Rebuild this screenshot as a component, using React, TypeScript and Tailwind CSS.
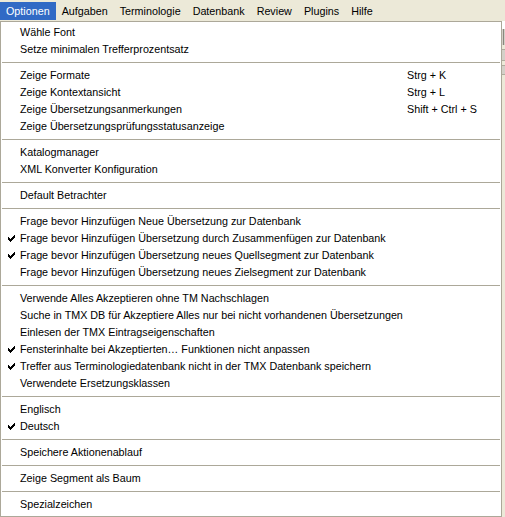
import React from "react";

type Item = { label: string; shortcut?: string; checked?: boolean } | "sep";

const items: Item[] = [
  { label: "Wähle Font" },
  { label: "Setze minimalen Trefferprozentsatz" },
  "sep",
  { label: "Zeige Formate", shortcut: "Strg + K" },
  { label: "Zeige Kontextansicht", shortcut: "Strg + L" },
  { label: "Zeige Übersetzungsanmerkungen", shortcut: "Shift + Ctrl + S" },
  { label: "Zeige Übersetzungsprüfungsstatusanzeige" },
  "sep",
  { label: "Katalogmanager" },
  { label: "XML Konverter Konfiguration" },
  "sep",
  { label: "Default Betrachter" },
  "sep",
  { label: "Frage bevor Hinzufügen Neue Übersetzung zur Datenbank" },
  { label: "Frage bevor Hinzufügen Übersetzung durch Zusammenfügen zur Datenbank", checked: true },
  { label: "Frage bevor Hinzufügen Übersetzung neues Quellsegment zur Datenbank", checked: true },
  { label: "Frage bevor Hinzufügen Übersetzung neues Zielsegment zur Datenbank" },
  "sep",
  { label: "Verwende Alles Akzeptieren ohne TM Nachschlagen" },
  { label: "Suche in TMX DB für Akzeptiere Alles nur bei nicht vorhandenen Übersetzungen" },
  { label: "Einlesen der TMX Eintragseigenschaften" },
  { label: "Fensterinhalte bei Akzeptierten… Funktionen nicht anpassen", checked: true },
  { label: "Treffer aus Terminologiedatenbank nicht in der TMX Datenbank speichern", checked: true },
  { label: "Verwendete Ersetzungsklassen" },
  "sep",
  { label: "Englisch" },
  { label: "Deutsch", checked: true },
  "sep",
  { label: "Speichere Aktionenablauf" },
  "sep",
  { label: "Zeige Segment als Baum" },
  "sep",
  { label: "Spezialzeichen" },
];

const menus = ["Optionen", "Aufgaben", "Terminologie", "Datenbank", "Review", "Plugins", "Hilfe"];

function Check() {
  const px: [number, number][] = [
    [6, 0],
    [5, 1], [6, 1],
    [0, 2], [4, 2], [5, 2], [6, 2],
    [0, 3], [1, 3], [3, 3], [4, 3], [5, 3],
    [0, 4], [1, 4], [2, 4], [3, 4], [4, 4],
    [1, 5], [2, 5], [3, 5],
    [2, 6],
  ];
  return (
    <svg width="7" height="7" viewBox="0 0 7 7" shapeRendering="crispEdges">
      {px.map(([x, y], i) => (
        <rect key={i} x={x} y={y} width="1" height="1" fill="#000" />
      ))}
    </svg>
  );
}

export default function App() {
  return (
    <div className="w-[505px] h-[517px] bg-[#ECE9D8] overflow-hidden flex flex-col font-['Liberation_Sans',Arial,sans-serif] text-[10.75px] text-black leading-none">
      <div className="h-[21px] flex items-stretch pt-[2px] pb-px">
        {menus.map((m, i) => (
          <div
            key={m}
            className={
              i === 0
                ? "px-[6px] flex items-center bg-[#316AC5] text-white"
                : "px-[6px] flex items-center"
            }
          >
            {m}
          </div>
        ))}
      </div>
      <div className="flex flex-1 min-h-0">
        <div className="w-[502px] bg-white border border-[#ACA899] pt-[2px] pb-[3px] flex flex-col">
          {items.map((it, i) =>
            it === "sep" ? (
              <div key={i} className="h-[9px] flex items-center px-px">
                <div className="h-px w-full bg-[#ACA899]" />
              </div>
            ) : (
              <div key={i} className="h-[17px] flex items-center">
                <div className="w-[19px] flex items-center justify-center pl-px">
                  {it.checked ? <Check /> : null}
                </div>
                <div className="w-[387px] whitespace-nowrap">{it.label}</div>
                <div className="whitespace-nowrap">{it.shortcut ?? ""}</div>
              </div>
            )
          )}
        </div>
        <div className="flex-1 flex flex-col">
          <div className="h-[8px] bg-white" />
          <div className="h-[16px] bg-[#8a877d] border-x border-[#D4D0C8]" />
          <div className="h-[4px] bg-[#ECE9D8]" />
          <div className="h-[12px] bg-[#D4D0C8] border-y border-[#B0AC9E]" />
          <div className="h-[4px] bg-[#ECE9D8]" />
          <div className="h-[10px] bg-[#D4D0C8] border-y border-[#B0AC9E]" />
          <div className="flex-1 bg-[#ECE9D8]" />
        </div>
      </div>
    </div>
  );
}
